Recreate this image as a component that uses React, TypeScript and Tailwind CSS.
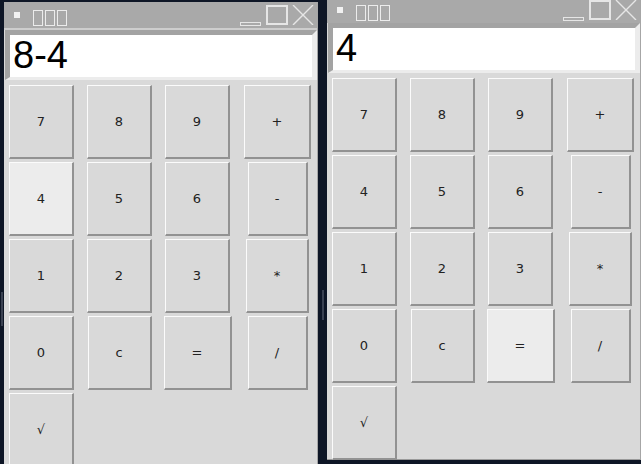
const keys: { label: string; w: string }[] = [
  { label: '7', w: 'w-[65px]' },
  { label: '8', w: 'w-[65px]' },
  { label: '9', w: 'w-[65px]' },
  { label: '+', w: 'w-[67px]' },
  { label: '4', w: 'w-[65px]' },
  { label: '5', w: 'w-[65px]' },
  { label: '6', w: 'w-[65px]' },
  { label: '-', w: 'w-[60px]' },
  { label: '1', w: 'w-[65px]' },
  { label: '2', w: 'w-[65px]' },
  { label: '3', w: 'w-[65px]' },
  { label: '*', w: 'w-[63px]' },
  { label: '0', w: 'w-[65px]' },
  { label: 'c', w: 'w-[64px]' },
  { label: '=', w: 'w-[68px]' },
  { label: '/', w: 'w-[60px]' },
  { label: '√', w: 'w-[65px]' },
];

function TitleBar() {
  return (
    <div className="flex h-[26px] shrink-0 items-start bg-[#a9a9a9] pl-[10px] pr-[3px]">
      <div className="mt-[10px] h-[6px] w-[6px] bg-[#f2f2f2]" />
      {/* title glyphs render as missing-glyph boxes */}
      <div className="ml-[13px] mt-[8px] flex gap-[2px]" aria-label="计算器">
        <span className="h-[16px] w-[10px] border border-[#ececec]" />
        <span className="h-[16px] w-[10px] border border-[#ececec]" />
        <span className="h-[16px] w-[10px] border border-[#ececec]" />
      </div>
      <div className="ml-auto mt-[20px] h-[4px] w-[21px] border border-[#e6e6e6]" />
      <div className="ml-[5px] mt-[3px] h-[20px] w-[22px] border-2 border-[#e6e6e6]" />
      <svg className="ml-[4px] mt-[3px]" width="22" height="20" viewBox="0 0 22 20">
        <path d="M1 0 L21 20 M21 0 L1 20" stroke="#e6e6e6" strokeWidth="1.4" fill="none" />
      </svg>
    </div>
  );
}

function Calc({ display, active, pos }: { display: string; active: string; pos: string }) {
  return (
    <div className={`absolute flex w-[314px] flex-col border-r border-[#a6a6a6] bg-[#d9d9d9] ${pos}`}>
      <TitleBar />
      <div className="h-[2px] bg-[#cdcdcd]" />
      <div className="ml-[1px] border-b-[3px] border-l-[5px] border-r-[5px] border-t-[5px] border-b-[#ececec] border-l-[#a3a3a3] border-r-[#ececec] border-t-[#a3a3a3] bg-white">
        <div className="h-[42px] pl-[3px] font-['Liberation_Sans',Arial,sans-serif] text-[38px] leading-[40px] text-black">
          {display}
        </div>
      </div>
      <div className="mt-[5px] grid grid-cols-[67px_67px_67px_71px] auto-rows-[74px] gap-x-[11px] gap-y-[3px] pl-[4px]">
        {keys.map((k) => (
          <button
            key={k.label}
            className={`${k.w} justify-self-center border-b-2 border-l border-r-2 border-t border-b-[#929292] border-l-[#fbfbfb] border-r-[#929292] border-t-[#fbfbfb] font-['DejaVu_Sans',sans-serif] text-[13px] text-[#222] ${
              k.label === active ? 'bg-[#ececec]' : 'bg-[#d9d9d9]'
            }`}
          >
            {k.label}
          </button>
        ))}
      </div>
    </div>
  );
}

export default function App() {
  return (
    <div className="relative h-[464px] w-[641px] overflow-hidden bg-[#0e1626]">
      <div className="absolute left-[1px] top-[292px] h-[34px] w-[2px] bg-[#3b4252]" />
      <div className="absolute left-[322px] top-[290px] h-[30px] w-[2px] bg-[#3b4252]" />
      <Calc display="8-4" active="4" pos="left-[4px] top-[2px] h-[480px]" />
      <Calc display="4" active="=" pos="left-[327px] top-[-3px] h-[463px] border-b border-b-[#9a9a9a]" />
    </div>
  );
}
